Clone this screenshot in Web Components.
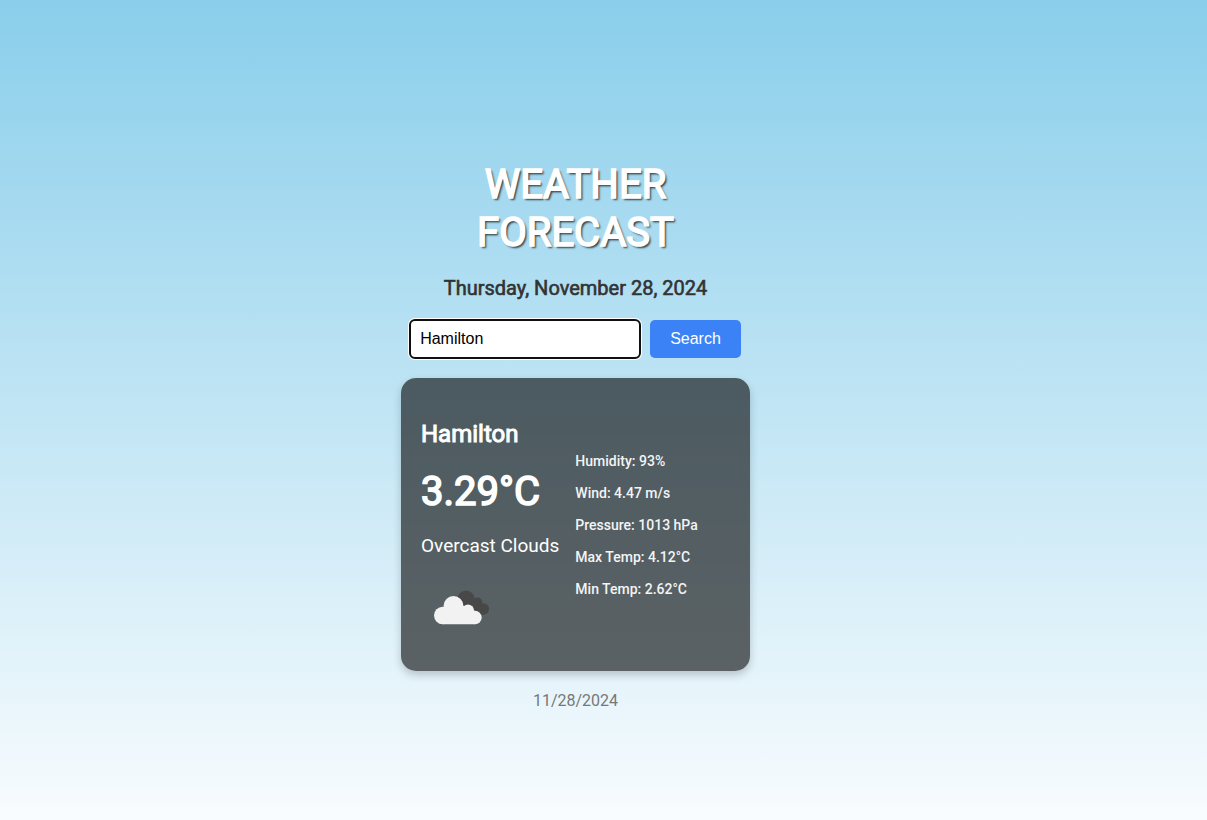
<!DOCTYPE html>
<html lang="en">
<head>
<meta charset="utf-8">
<meta name="viewport" content="width=device-width, initial-scale=1">
<title>Weather Forecast</title>
<style>
  html { height: 100%; }
  body {
    margin: 0;
    min-height: 100%;
    background: linear-gradient(to bottom, #8aceeb, #f8fcfe);
    font-family: Roboto, Arial, sans-serif;
    color: #333;
  }
</style>
</head>
<body>
<weather-app>
  <weather-search slot="search" city="Hamilton"></weather-search>
  <weather-card slot="card">
    <span slot="city">Hamilton</span>
    <span slot="temperature">3.29°C</span>
    <span slot="description">Overcast Clouds</span>
    <cloud-icon slot="icon"></cloud-icon>
    <weather-detail slot="details" label="Humidity">93%</weather-detail>
    <weather-detail slot="details" label="Wind">4.47 m/s</weather-detail>
    <weather-detail slot="details" label="Pressure">1013 hPa</weather-detail>
    <weather-detail slot="details" label="Max Temp">4.12°C</weather-detail>
    <weather-detail slot="details" label="Min Temp">2.62°C</weather-detail>
  </weather-card>
  <span slot="footer">11/28/2024</span>
</weather-app>
<script>
class BaseElement extends HTMLElement {
  constructor() {
    super();
    this.attachShadow({ mode: "open" }).innerHTML = this.constructor.markup;
  }
}

customElements.define("cloud-icon", class extends BaseElement {
  static markup = `
    <style>
      :host { display: block; width: 80px; height: 80px; }
      svg { display: block; width: 100%; height: 100%; }
    </style>
    <svg viewBox="0 0 80 80" role="img" aria-label="Overcast clouds">
      <g fill="#484848">
        <circle cx="45" cy="28" r="8.6"/>
        <circle cx="56.5" cy="31.5" r="5"/>
        <circle cx="62.5" cy="38" r="5.7"/>
        <path d="M42 28h15l5 15.700H48z"/>
      </g>
      <g fill="#f2f2f2">
        <circle cx="21.700" cy="44.500" r="8.700"/>
        <circle cx="32.500" cy="35" r="10"/>
        <circle cx="47" cy="39.500" r="6"/>
        <circle cx="54" cy="46.500" r="6.700"/>
        <path d="M21.700 53.200h32.300V40l-8-5H30l-9 8z"/>
      </g>
    </svg>`;
});

customElements.define("weather-detail", class extends BaseElement {
  static markup = `
    <style>
      :host { display: block; font-size: 14px; line-height: 16px; font-weight: 500; color: #f4f4f4; }
      p { margin: 0; }
    </style>
    <p><span id="label"></span>: <slot></slot></p>`;
  connectedCallback() {
    this.shadowRoot.getElementById("label").textContent = this.getAttribute("label");
  }
});

customElements.define("weather-card", class extends BaseElement {
  static markup = `
    <style>
      :host {
        display: flex;
        align-items: center;
        gap: 16px;
        padding: 20px;
        border-radius: 15px;
        background: rgba(0, 0, 0, 0.6);
        box-shadow: 0 4px 8px rgba(0, 0, 0, 0.2);
        color: #fff;
      }
      .summary { flex: none; }
      h2, p { margin: 0; }
      h2, .temperature { font-weight: 400; -webkit-text-stroke: 0.04em currentColor; }
      h2 { margin-top: 20px; font-size: 24px; line-height: 32px; }
      .temperature { margin-top: 16px; font-size: 40px; line-height: 52px; }
      .description { margin-top: 16px; font-size: 19px; line-height: 24px; font-weight: 400; color: #fff; }
      .icon { margin-top: 13px; }
      .details { flex: 1; display: flex; flex-direction: column; gap: 16px; }
    </style>
    <div class="summary">
      <h2><slot name="city"></slot></h2>
      <p class="temperature"><slot name="temperature"></slot></p>
      <p class="description"><slot name="description"></slot></p>
      <div class="icon"><slot name="icon"></slot></div>
    </div>
    <div class="details"><slot name="details"></slot></div>`;
});

customElements.define("weather-search", class extends BaseElement {
  static markup = `
    <style>
      :host { display: block; }
      form { display: flex; justify-content: center; gap: 10px; }
      label { display: flex; }
      input, button {
        box-sizing: border-box;
        height: 38px;
        margin: 0;
        border: 0;
        border-radius: 5px;
        font: 16px "Liberation Sans", Arial, sans-serif;
      }
      input {
        width: 230px;
        padding: 0 10px;
        background: #fff;
        color: #000;
        outline: 2px solid #101010;
        outline-offset: -1px;
        box-shadow: 0 0 0 2px #fff;
      }
      button { padding: 0 20px; background: #3b82f6; color: #fff; cursor: pointer; }
    </style>
    <form>
      <label><input type="text" aria-label="City"></label>
      <button type="submit">Search</button>
    </form>`;
  connectedCallback() {
    this.shadowRoot.querySelector("input").value = this.getAttribute("city");
    this.shadowRoot.querySelector("form").addEventListener("submit", e => e.preventDefault());
  }
});

customElements.define("weather-app", class extends BaseElement {
  static markup = `
    <style>
      :host { display: block; padding: 161px 56px 100px 0; }
      main { width: 100%; max-width: 349px; margin: 0 auto; text-align: center; }
      h1, .date { font-weight: 400; -webkit-text-stroke: 0.03em currentColor; }
      h1 {
        margin: 0;
        padding: 0 60px;
        font-size: 40px;
        line-height: 48px;
        -webkit-text-stroke-width: 0.04em;
        text-transform: uppercase;
        color: #fff;
        text-shadow: 2px 2px 2px rgba(0, 0, 0, 0.7);
      }
      .date { margin: 19px 0 20px; font-size: 20px; line-height: 24px; }
      .card { margin-top: 20px; text-align: left; }
      footer { margin-top: 20px; font-size: 16px; line-height: 20px; color: #777; }
    </style>
    <main>
      <h1>Weather Forecast</h1>
      <p class="date">Thursday, November 28, 2024</p>
      <slot name="search"></slot>
      <div class="card"><slot name="card"></slot></div>
      <footer><slot name="footer"></slot></footer>
    </main>`;
});
</script>
</body>
</html>
